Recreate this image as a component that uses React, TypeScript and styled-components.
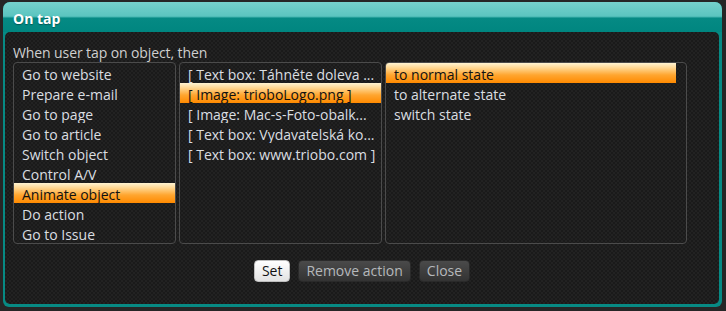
import React from "react";
import styled, { createGlobalStyle, css } from "styled-components";

const GlobalStyle = createGlobalStyle`
  html, body { margin: 0; padding: 0; }
  body {
    background: #262626;
    font-family: "Open Sans", "Noto Sans", sans-serif;
  }
`;

const Page = styled.div`
  padding: 2px 4px 4px 3px;
`;

const Dialog = styled.div`
  display: flex;
  flex-direction: column;
  height: 305px;
  box-sizing: border-box;
  background: #078a84;
  border-radius: 7px 7px 6px 6px;
  overflow: hidden;
`;

const TitleBar = styled.div`
  height: 30px;
  box-sizing: border-box;
  flex: none;
  display: flex;
  align-items: center;
  padding: 2px 0 0 10px;
  background: linear-gradient(
    to bottom,
    #76d2cd 0%,
    #5cc5c0 45%,
    #48b8b3 50%,
    #058a84 53%,
    #008680 100%
  );
  color: #fff;
  font-weight: 700;
  font-size: 14px;
  text-shadow: 0 1px 1px rgba(0, 0, 0, 0.35);
`;

const Body = styled.div`
  flex: 1;
  margin: 0 3px 3px 2px;
  padding: 12px 8px 0 8px;
  border-radius: 5px;
  display: flex;
  flex-direction: column;
  background: repeating-conic-gradient(#1a1a1a 0 25%, #222 0 50%) 0 0 / 4px 4px;
`;

const Label = styled.div`
  font-size: 14px;
  line-height: 17px;
  height: 16px;
  color: #cfcfcf;
  margin-bottom: 2px;
  letter-spacing: -0.1px;
`;

const Lists = styled.div`
  display: flex;
  gap: 3px;
`;

const List = styled.div<{ $w: number; $pr?: number }>`
  width: ${(p) => p.$w}px;
  height: 182px;
  box-sizing: border-box;
  border: 1px solid #4b4b4b;
  border-radius: 4px;
  padding-right: ${(p) => p.$pr ?? 0}px;
  overflow: hidden;
`;

const Item = styled.div<{ $sel?: boolean }>`
  height: 20px;
  line-height: 23px;
  padding-left: 8px;
  font-size: 14px;
  white-space: nowrap;
  overflow: hidden;
  color: #dadee1;
  ${(p) =>
    p.$sel &&
    css`
      color: #111;
      background: linear-gradient(
        to bottom,
        #fff4d2 0%,
        #ffd690 25%,
        #ffa630 60%,
        #ff8a00 100%
      );
    `}
`;

const Buttons = styled.div`
  display: flex;
  justify-content: center;
  gap: 8px;
  margin-top: 16px;
`;

const Button = styled.button<{ $primary?: boolean }>`
  height: 22px;
  padding: 0 7px;
  border-radius: 4px;
  font-family: inherit;
  font-size: 14px;
  line-height: 20px;
  cursor: pointer;
  ${(p) =>
    p.$primary
      ? css`
          color: #111;
          border: 1px solid #bdbdbd;
          background: linear-gradient(to bottom, #ffffff, #e2e2e2);
        `
      : css`
          color: #b5b8bb;
          border: 1px solid #2a2a2a;
          background: linear-gradient(to bottom, #4a4a4a, #333333);
        `}
`;

const actions = [
  "Go to website",
  "Prepare e-mail",
  "Go to page",
  "Go to article",
  "Switch object",
  "Control A/V",
  "Animate object",
  "Do action",
  "Go to Issue",
];

const objects = [
  "[ Text box: Táhněte doleva ...",
  "[ Image: trioboLogo.png ]",
  "[ Image: Mac-s-Foto-obalk...",
  "[ Text box: Vydavatelská ko...",
  "[ Text box: www.triobo.com ]",
];

const states = ["to normal state", "to alternate state", "switch state"];

export default function App() {
  return (
    <>
      <GlobalStyle />
      <Page>
        <Dialog>
          <TitleBar>On tap</TitleBar>
          <Body>
            <Label>When user tap on object, then</Label>
            <Lists>
              <List $w={163}>
                {actions.map((a) => (
                  <Item key={a} $sel={a === "Animate object"}>
                    {a}
                  </Item>
                ))}
              </List>
              <List $w={203}>
                {objects.map((o, i) => (
                  <Item key={o} $sel={i === 1}>
                    {o}
                  </Item>
                ))}
              </List>
              <List $w={302} $pr={10}>
                {states.map((s, i) => (
                  <Item key={s} $sel={i === 0}>
                    {s}
                  </Item>
                ))}
              </List>
            </Lists>
            <Buttons>
              <Button $primary>Set</Button>
              <Button>Remove action</Button>
              <Button>Close</Button>
            </Buttons>
          </Body>
        </Dialog>
      </Page>
    </>
  );
}
